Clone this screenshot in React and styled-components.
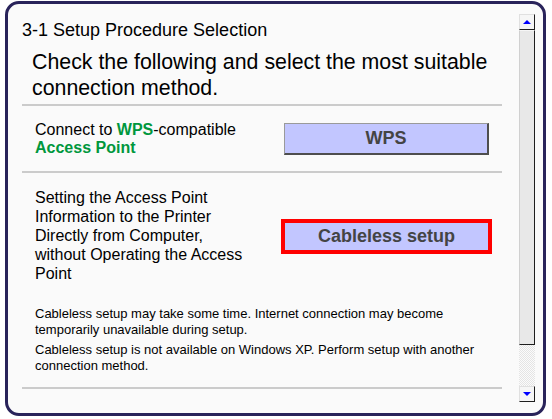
import React from 'react'
import styled, { createGlobalStyle } from 'styled-components'

const GlobalStyle = createGlobalStyle`
  html, body {
    margin: 0;
    padding: 0;
    background: #ffffff;
  }
  body {
    font-family: 'Liberation Sans', Arial, sans-serif;
    color: #000;
  }
`

const Frame = styled.div`
  box-sizing: border-box;
  width: 541px;
  height: 415px;
  margin: 1px 0 0 5px;
  border: 3px solid #29235a;
  border-radius: 14px;
  background: #fafafa;
  display: flex;
  overflow: hidden;
`

const Content = styled.div`
  width: 480px;
  flex: none;
  padding: 16px 0 0 14px;
`

const Title = styled.div`
  font-size: 18px;
  line-height: 21px;
`

const Heading = styled.div`
  font-size: 16pt;
  line-height: 26px;
  margin: 8px 0 3px 10px;
`

const Section = styled.div`
  border-top: 2px solid #cbcbcb;
  border-bottom: ${props => (props.last ? '2px solid #cbcbcb' : 'none')};
  padding: ${props => props.pad || '0 13px'};
`

const Row = styled.div`
  display: flex;
  justify-content: space-between;
  align-items: center;
  min-height: ${props => props.height || 0}px;
`

const Label = styled.div`
  width: 215px;
  font-size: 16px;
  line-height: ${props => props.lh || 18}px;
`

const Green = styled.b`
  color: #00973d;
`

const Button = styled.button`
  box-sizing: border-box;
  width: ${props => props.w || 205}px;
  height: ${props => props.h || 32}px;
  padding: 0;
  background: #c2c6ff;
  border: ${props => (props.flat ? 'none' : '1px solid #9a9a9a')};
  border-right: ${props => (props.flat ? 'none' : '2px solid #4e4e4e')};
  border-bottom: ${props => (props.flat ? 'none' : '2px solid #4e4e4e')};
  font-family: 'Liberation Sans', Arial, sans-serif;
  font-size: 18px;
  font-weight: bold;
  color: #444444;
  cursor: pointer;
`

const Highlight = styled.div`
  border: 4px solid #ff0000;
  margin: 2px -3px 0 0;
  display: flex;
`

const Notes = styled.div`
  margin-top: 23px;
  width: 460px;
  font-size: 13px;
  line-height: 16px;
`

const Note = styled.p`
  margin: 0;
  & + & {
    margin-top: 4px;
  }
`

const ScrollBar = styled.div`
  width: 16px;
  flex: none;
  margin: 10px 0 11px 17px;
  display: flex;
  flex-direction: column;
  background: repeating-conic-gradient(#e4e4e4 0 25%, #fbfbfb 0 50%) 0 0 / 2px 2px;
`

const ScrollButton = styled.div`
  box-sizing: border-box;
  height: 16px;
  flex: none;
  margin-top: ${props => (props.bottom ? 'auto' : 0)};
  background: #f6f6f6;
  border-top: 1px solid #e0e0e0;
  border-left: 1px solid #e0e0e0;
  border-right: 1px solid #1e1e1e;
  border-bottom: 1px solid #1e1e1e;
  display: flex;
  align-items: center;
  justify-content: center;
`

const Thumb = styled.div`
  box-sizing: border-box;
  height: 315px;
  flex: none;
  background: #e8e8e8;
  border-top: 1px solid #f6f6f6;
  border-left: 1px solid #d0d0d0;
  border-right: 1px solid #1e1e1e;
  border-bottom: 1px solid #1e1e1e;
`

const Arrow = ({ down }) => (
  <svg width='8' height='4' viewBox='0 0 8 4'>
    <polygon points={down ? '0,0 8,0 4,4' : '0,4 8,4 4,0'} fill='#0000ff' />
  </svg>
)

export default function App () {
  return (
    <>
      <GlobalStyle />
      <Frame>
        <Content>
          <Title>3-1 Setup Procedure Selection</Title>
          <Heading>Check the following and select the most suitable connection method.</Heading>
          <Section>
            <Row height={65}>
              <Label>
                Connect to <Green>WPS</Green>-compatible <Green>Access Point</Green>
              </Label>
              <Button>WPS</Button>
            </Row>
          </Section>
          <Section pad='15px 13px 13px' last>
            <Row>
              <Label lh={19}>
                Setting the Access Point Information to the Printer Directly from Computer, without Operating the Access Point
              </Label>
              <Highlight>
                <Button flat w={203} h={27}>Cableless setup</Button>
              </Highlight>
            </Row>
            <Notes>
              <Note>Cableless setup may take some time. Internet connection may become temporarily unavailable during setup.</Note>
              <Note>Cableless setup is not available on Windows XP. Perform setup with another connection method.</Note>
            </Notes>
          </Section>
        </Content>
        <ScrollBar>
          <ScrollButton><Arrow /></ScrollButton>
          <Thumb />
          <ScrollButton bottom><Arrow down /></ScrollButton>
        </ScrollBar>
      </Frame>
    </>
  )
}
